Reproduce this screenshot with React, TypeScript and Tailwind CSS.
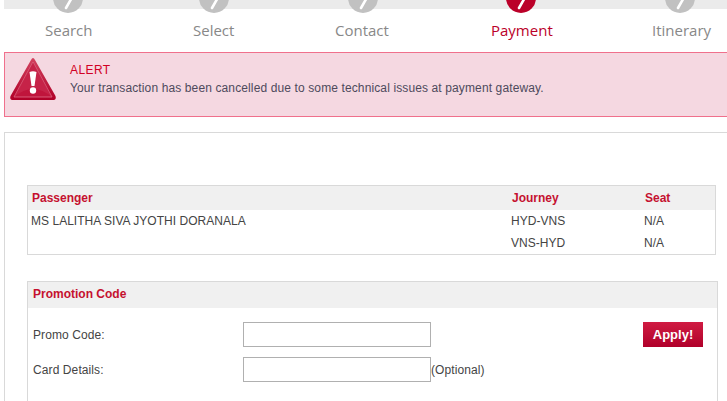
const F = { fontFamily: '"Liberation Sans", Arial, sans-serif' };

function Step({ label, active, className, circle }: { label: string; active?: boolean; className: string; circle?: string }) {
  return (
    <div className={`flex flex-col items-center ${className}`}>
      <div className={`relative -mt-[26px] h-[30px] w-[30px] overflow-hidden rounded-full ${active ? "bg-[#bb0029]" : "bg-[#c1c1c1]"} ${circle ?? ""}`}>
        <svg viewBox="0 0 30 30" className="h-[30px] w-[30px]">
          <path d="M21 11 L13 25" stroke="#fff" strokeWidth="2.6" strokeLinecap="round" />
        </svg>
      </div>
      <div
        className={`mt-[7px] whitespace-nowrap text-[15px] leading-[20px] ${active ? "text-[#bb0029]" : "text-[#888888]"}`}
        style={{ fontFamily: '"Open Sans", sans-serif' }}
      >
        {label}
      </div>
    </div>
  );
}

function AlertIcon() {
  return (
    <svg viewBox="0 0 48 44" className="h-[44px] w-[48px]">
      <defs>
        <linearGradient id="g" x1="0" y1="0" x2="0" y2="1">
          <stop offset="0" stopColor="#d2425f" />
          <stop offset="1" stopColor="#b00028" />
        </linearGradient>
      </defs>
      <path d="M24 1 Q25 1 26 3 L46.500 39 Q47.500 42.500 45 43 L3 43 Q0.500 42.500 1.500 39 L22 3 Q23 1 24 1 Z" fill="url(#g)" />
      <path d="M24 5 L43 40 L5 40 Z" fill="#c0153c" stroke="#e47b92" strokeWidth="0.7" />
      <path d="M5 40 L24 5 L43 40 Q24 24 5 40 Z" fill="#cb2f52" opacity="0.55" />
      <path d="M20.500 15 Q24 13.500 27.500 15 L25.500 29 L22.500 29 Z" fill="#fff" />
      <circle cx="24" cy="33.500" r="3.2" fill="#fff" />
    </svg>
  );
}

export default function App() {
  return (
    <div className="h-[401px] w-[727px] overflow-hidden bg-white text-[12px] text-[#444444]" style={F}>
      <div className="ml-[4px] h-[9px] bg-[#ebebeb]" />
      <div className="relative flex h-[43px]">
        <Step label="Search" className="absolute left-[45px] top-0" circle="-translate-x-[1px]" />
        <Step label="Select" className="absolute left-[193px] top-0" />
        <Step label="Contact" className="absolute left-[335px] top-0" circle="translate-x-[1px]" />
        <Step label="Payment" active className="absolute left-[491px] top-0" circle="-translate-x-[1px]" />
        <Step label="Itinerary" className="absolute left-[652px] top-0" circle="-translate-x-[2px]" />
      </div>

      <div className="ml-[4px] flex h-[65px] border border-[#f0708c] border-r-0 bg-[#f5d8e1]">
        <div className="ml-[4px] mt-[4px] shrink-0"><AlertIcon /></div>
        <div className="ml-[13px] mt-[10px]">
          <div className="text-[12px] leading-[15px] tracking-[0.4px] text-[#d20024]">ALERT</div>
          <div className="mt-[3px] text-[12px] leading-[15px] tracking-[0.12px] text-[#4e4a5c]">
            Your transaction has been cancelled due to some technical issues at payment gateway.
          </div>
        </div>
      </div>

      <div className="ml-[4px] mt-[15px] h-[300px] border border-r-0 border-[#d9d9d9] pl-[22px] pt-[52px]">
        <div className="w-[689px] border border-[#d9d9d9]">
          <div className="flex h-[24px] items-center bg-[#f0f0f0] font-bold text-[#c5112f]">
            <div className="w-[484px] pl-[4px]">Passenger</div>
            <div className="w-[133px]">Journey</div>
            <div>Seat</div>
          </div>
          <div className="flex h-[22px] items-center tracking-[0.03px]">
            <div className="w-[483px] pl-[3px]">MS LALITHA SIVA JYOTHI DORANALA</div>
            <div className="w-[133px]">HYD-VNS</div>
            <div>N/A</div>
          </div>
          <div className="flex h-[22px] items-center tracking-[0.03px]">
            <div className="w-[483px] pl-[3px]" />
            <div className="w-[133px]">VNS-HYD</div>
            <div>N/A</div>
          </div>
        </div>

        <div className="mt-[26px] h-[200px] w-[691px] border border-[#d9d9d9]">
          <div className="flex h-[26px] items-center bg-[#f0f0f0] pb-[2px] pl-[5px] font-bold text-[#c5112f]">Promotion Code</div>
          <div className="mt-[14px] flex h-[25px] items-center pl-[5px]">
            <div className="w-[210px] tracking-[0.1px]">Promo Code:</div>
            <input className="h-[25px] w-[188px] border border-[#b0b0b0] bg-white" />
            <button className="ml-[212px] h-[25px] w-[60px] bg-gradient-to-b from-[#d01a42] to-[#b0002a] text-[13px] font-bold text-white">
              Apply!
            </button>
          </div>
          <div className="mt-[10px] flex h-[25px] items-center pl-[5px]">
            <div className="w-[210px] tracking-[0.1px]">Card Details:</div>
            <input className="h-[25px] w-[188px] border border-[#b0b0b0] bg-white" />
            <span className="tracking-[0.1px]">(Optional)</span>
          </div>
        </div>
      </div>
    </div>
  );
}
